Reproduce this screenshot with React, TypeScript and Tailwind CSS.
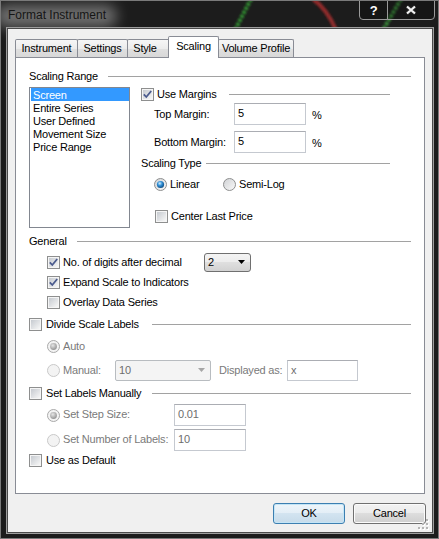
import React from 'react';

type RadioState = 'on' | 'off' | 'dimOn' | 'dimOff';

// Win7-style classic controls, drawn small so they sit on the 11px text grid
function CheckBox({ checked = false }: { checked?: boolean }) {
  return (
    <svg width="13" height="13" viewBox="0 0 13 13" className="shrink-0">
      <defs>
        <linearGradient id="cb-fill" x1="0" y1="0" x2="1" y2="1">
          <stop offset="0" stopColor="#c6cad0" />
          <stop offset="1" stopColor="#f7f7f7" />
        </linearGradient>
      </defs>
      <rect x="0.5" y="0.5" width="12" height="12" fill="#f5f5f5" stroke="#8e8f8f" />
      <rect x="2" y="2" width="9" height="9" fill="url(#cb-fill)" />
      {checked && (
        <path d="M2.8 6.4 L5.3 9 L10.2 3" fill="none" stroke="#4b5b8e" strokeWidth="1.8" />
      )}
    </svg>
  );
}

function Radio({ state }: { state: RadioState }) {
  const dim = state === 'dimOn' || state === 'dimOff';
  return (
    <svg width="13" height="13" viewBox="0 0 13 13" className="shrink-0">
      <defs>
        <linearGradient id="rb-fill" x1="0" y1="0" x2="1" y2="1">
          <stop offset="0" stopColor="#cfd1d4" />
          <stop offset="1" stopColor="#fafafa" />
        </linearGradient>
        <radialGradient id="rb-dot" cx="0.4" cy="0.35" r="0.7">
          <stop offset="0" stopColor="#d6f0ff" />
          <stop offset="0.45" stopColor="#2f8fd6" />
          <stop offset="1" stopColor="#0a4478" />
        </radialGradient>
        <radialGradient id="rb-dim" cx="0.4" cy="0.35" r="0.7">
          <stop offset="0" stopColor="#e6e6e6" />
          <stop offset="1" stopColor="#8f8f8f" />
        </radialGradient>
      </defs>
      <circle
        cx="6.5"
        cy="6.5"
        r="6"
        fill={dim ? '#f3f3f3' : 'url(#rb-fill)'}
        stroke={state === 'dimOff' ? '#c8c8c8' : dim ? '#a9a9a9' : '#8e8f8f'}
      />
      {state === 'on' && <circle cx="6.5" cy="6.5" r="3.6" fill="url(#rb-dot)" />}
      {state === 'dimOn' && <circle cx="6.5" cy="6.5" r="3.4" fill="url(#rb-dim)" />}
    </svg>
  );
}

function DownArrow({ color }: { color: string }) {
  return (
    <svg width="7" height="4" viewBox="0 0 7 4" className="shrink-0">
      <path d="M0 0 H7 L3.5 4 Z" fill={color} />
    </svg>
  );
}

function TextBox({ value, className, dim = false }: { value: string; className: string; dim?: boolean }) {
  return (
    <div
      className={`${className} bg-white border border-[#c5c9d0] border-t-[#abadb3] pl-[3px] pt-[3px] leading-[13px] ${
        dim ? 'text-[#6d6d6d]' : 'text-black'
      }`}
    >
      {value}
    </div>
  );
}

function GroupHeader({ children, lineClass }: { children: React.ReactNode; lineClass: string }) {
  return (
    <div className="h-[14px] flex items-center">
      {children}
      <div className={`${lineClass} flex-1 h-px bg-[#a2a2a2]`} />
    </div>
  );
}

const scalingRanges = ['Screen', 'Entire Series', 'User Defined', 'Movement Size', 'Price Range'];

function Tab({ label, className }: { label: string; className: string }) {
  return (
    <div
      className={`${className} h-[18px] border border-b-0 border-[#898c95] rounded-t-[2px] bg-[linear-gradient(#f6f6f6,#ececec_50%,#e0e0e0_50%,#d8d8d8)] flex items-center justify-center`}
    >
      {label}
    </div>
  );
}

export default function App() {
  return (
    <div className="w-[439px] h-[539px] bg-[#1c1c1c] border border-[#7a7a7a] flex flex-col overflow-hidden text-[11px] tracking-[-0.2px] text-black [font-family:'Liberation_Sans',Arial,sans-serif]">
      {/* caption */}
      <div className="h-[27px] shrink-0 relative flex items-start">
        <svg className="absolute left-0 top-0" width="437" height="27" viewBox="0 0 437 27">
          <defs>
            <filter id="soft">
              <feGaussianBlur stdDeviation="1.1" />
            </filter>
          </defs>
          <g filter="url(#soft)" fill="none">
            <path d="M250 -2 L234 29" stroke="#35a335" strokeWidth="4" strokeDasharray="3 1.5" opacity="0.9" />
            <path d="M312 -2 Q326 8 335 29" stroke="#9c2c2c" strokeWidth="4" opacity="0.9" />
            <path d="M400 -2 L382 29" stroke="#3fa63f" strokeWidth="4" strokeDasharray="3 1.5" opacity="0.85" />
          </g>
        </svg>
        <div className="absolute left-[-6px] top-[4px] w-[122px] h-[22px] rounded-full bg-[#969696] blur-[7px] opacity-70" />
        <span className="relative pl-[7px] h-[27px] flex items-center text-[12px] tracking-normal text-[#151515]">
          Format Instrument
        </span>
        <div className="relative ml-auto mr-[3px] -mt-px flex">
          <div className="w-[29px] h-[20px] border border-[#9a9a9a] rounded-bl-[4px] bg-[#000000]/20 flex items-center justify-center text-white font-bold text-[13px] leading-none">
            ?
          </div>
          <div className="w-[48px] h-[20px] -ml-px border border-[#9a9a9a] rounded-br-[4px] bg-[#000000]/20 flex items-center justify-center">
            <svg width="12" height="10" viewBox="0 0 12 10">
              <path d="M2 1.5 L10 8.5 M10 1.5 L2 8.5" stroke="#2a2a2a" strokeWidth="4" />
              <path d="M2 1.5 L10 8.5 M10 1.5 L2 8.5" stroke="#f2f2f2" strokeWidth="2.2" />
            </svg>
          </div>
        </div>
      </div>

      {/* client area */}
      <div className="ml-[6px] w-[426px] h-[505px] shrink-0 bg-[#f0f0f0] border border-[#4a4a4a] shadow-[0_0_0_1px_#9e9e9e] relative flex flex-col">
        <div className="pt-[7px] pl-[7px] h-[28px] flex items-end">
          <Tab label="Instrument" className="w-[63px]" />
          <Tab label="Settings" className="w-[51px] -ml-px" />
          <Tab label="Style" className="w-[43px] -ml-px pr-[7px]" />
          <div className="relative z-10 w-[51px] h-[22px] -ml-[2px] mb-[-1px] bg-white border border-b-0 border-[#898c95] rounded-t-[2px] flex items-center justify-center pb-[2px]">
            Scaling
          </div>
          <Tab label="Volume Profile" className="w-[76px] -ml-px" />
        </div>

        <div className="ml-[7px] w-[410px] h-[437px] border border-[#898c95] bg-white px-[13px] flex flex-col leading-[13px]">
          <div className="mt-[11px]">
            <GroupHeader lineClass="ml-[10px]">
              <span>Scaling Range</span>
            </GroupHeader>
          </div>

          <div className="mt-[4px] h-[141px] flex">
            <div className="w-[101px] h-[141px] border border-[#828790] flex flex-col">
              {scalingRanges.map((r, i) => (
                <div
                  key={r}
                  className={`ml-px h-[13px] pl-[2px] leading-[14px] ${
                    i === 0 ? 'bg-[#3399ff] text-white' : 'text-black'
                  }`}
                >
                  {r}
                </div>
              ))}
            </div>

            <div className="ml-[11px] w-[249px] flex flex-col">
              <GroupHeader lineClass="ml-[12px]">
                <CheckBox checked />
                <span className="ml-[3px]">Use Margins</span>
              </GroupHeader>
              <div className="mt-[2px] h-[22px] pl-[13px] flex items-center">
                <span className="w-[80px]">Top Margin:</span>
                <TextBox value="5" className="w-[72px] h-[22px]" />
                <span className="ml-[6px] mt-[2px]">%</span>
              </div>
              <div className="mt-[6px] h-[22px] pl-[13px] flex items-center">
                <span className="w-[80px]">Bottom Margin:</span>
                <TextBox value="5" className="w-[72px] h-[22px]" />
                <span className="ml-[6px] mt-[2px]">%</span>
              </div>
              <div className="mt-[3px]">
                <GroupHeader lineClass="ml-[5px]">
                  <span>Scaling Type</span>
                </GroupHeader>
              </div>
              <div className="mt-[7px] h-[14px] pl-[13px] flex items-center">
                <div className="w-[69px] flex items-center">
                  <Radio state="on" />
                  <span className="ml-[3px]">Linear</span>
                </div>
                <Radio state="off" />
                <span className="ml-[3px]">Semi-Log</span>
              </div>
              <div className="mt-[18px] h-[14px] pl-[14px] flex items-center">
                <CheckBox />
                <span className="ml-[3px]">Center Last Price</span>
              </div>
            </div>
          </div>

          <div className="mt-[6px]">
            <GroupHeader lineClass="ml-[10px]">
              <span>General</span>
            </GroupHeader>
          </div>
          <div className="mt-[4px] pl-[18px] flex flex-col">
            <div className="h-[20px] flex items-center">
              <CheckBox checked />
              <span className="ml-[3px] w-[141px]">No. of digits after decimal</span>
              <div className="w-[47px] h-[19px] rounded-[3px] border border-[#707070] bg-[linear-gradient(#f4f4f4,#ececec_50%,#dfdfdf_50%,#d2d2d2)] flex items-center pl-[3px] pr-[5px]">
                <span className="flex-1">2</span>
                <DownArrow color="#000" />
              </div>
            </div>
            <div className="h-[20px] flex items-center">
              <CheckBox checked />
              <span className="ml-[3px]">Expand Scale to Indicators</span>
            </div>
            <div className="h-[20px] flex items-center">
              <CheckBox />
              <span className="ml-[3px]">Overlay Data Series</span>
            </div>
          </div>

          <div className="mt-[5px] h-[14px] flex items-center">
            <CheckBox />
            <span className="ml-[4px] w-[106px]">Divide Scale Labels</span>
            <div className="flex-1 h-px bg-[#a2a2a2]" />
          </div>
          <div className="mt-[3px] pl-[18px] flex flex-col text-[#7a7a7a]">
            <div className="h-[24px] flex items-center">
              <Radio state="dimOn" />
              <span className="ml-[3px]">Auto</span>
            </div>
            <div className="h-[24px] flex items-center">
              <Radio state="dimOff" />
              <span className="ml-[3px] w-[52px]">Manual:</span>
              <div className="w-[96px] h-[21px] rounded-[2px] border border-[#b8bcc0] bg-[#f4f4f4] flex items-center pl-[3px] pr-[5px] text-[#6d6d6d]">
                <span className="flex-1">10</span>
                <DownArrow color="#a6a6a6" />
              </div>
              <span className="ml-[8px] w-[68px]">Displayed as:</span>
              <TextBox value="x" dim className="w-[71px] h-[21px]" />
            </div>
          </div>

          <div className="mt-[4px] h-[14px] flex items-center">
            <CheckBox />
            <span className="ml-[4px] w-[106px]">Set Labels Manually</span>
            <div className="flex-1 h-px bg-[#a2a2a2]" />
          </div>
          <div className="mt-[4px] h-[22px] pl-[18px] flex items-center text-[#7a7a7a]">
            <Radio state="dimOn" />
            <span className="ml-[3px] w-[111px] -mt-[2px]">Set Step Size:</span>
            <TextBox value="0.01" dim className="w-[72px] h-[22px]" />
          </div>
          <div className="mt-[3px] h-[22px] pl-[18px] flex items-center text-[#7a7a7a]">
            <Radio state="dimOff" />
            <span className="ml-[3px] w-[111px] -mt-[2px]">Set Number of Labels:</span>
            <TextBox value="10" dim className="w-[72px] h-[22px]" />
          </div>
          <div className="mt-[2px] h-[14px] flex items-center">
            <CheckBox />
            <span className="ml-[4px]">Use as Default</span>
          </div>
        </div>

        <div className="mt-[9px] pr-[6px] flex justify-end gap-[8px]">
          <button className="w-[72px] h-[21px] rounded-[3px] border border-[#3c7fb1] bg-[linear-gradient(#eef5fa,#e3eef6_50%,#d3e4f0_50%,#c6dbea)] shadow-[inset_0_0_0_1px_#c4e5f6]">
            OK
          </button>
          <button className="w-[73px] h-[21px] rounded-[3px] border border-[#707070] bg-[linear-gradient(#f2f2f2,#ebebeb_50%,#dddddd_50%,#cfcfcf)] shadow-[inset_0_0_0_1px_#fbfbfb]">
            Cancel
          </button>
        </div>

        {/* size grip */}
        <svg className="absolute right-[3px] bottom-[2px]" width="11" height="11" viewBox="0 0 11 11">
          {[
            [8, 0],
            [8, 4],
            [4, 4],
            [8, 8],
            [4, 8],
            [0, 8],
          ].map(([x, y]) => (
            <g key={`${x}-${y}`}>
              <rect x={x + 1} y={y + 1} width="2" height="2" fill="#ffffff" />
              <rect x={x} y={y} width="2" height="2" fill="#b4b4b4" />
            </g>
          ))}
        </svg>
      </div>
    </div>
  );
}
